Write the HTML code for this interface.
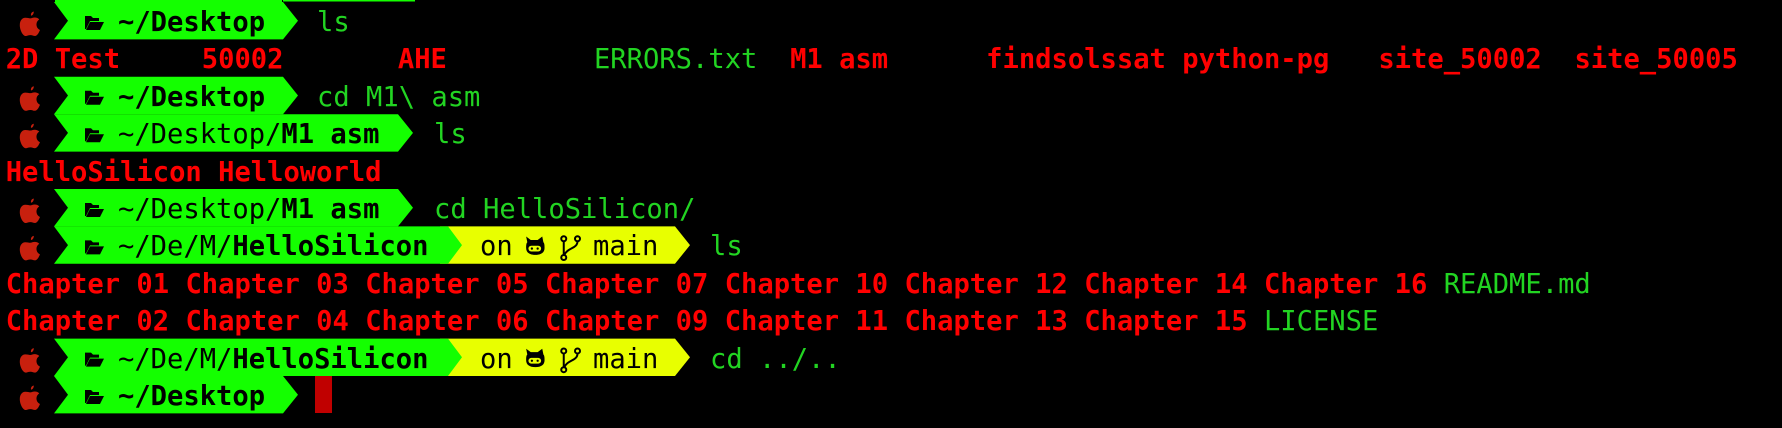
<!DOCTYPE html>
<html><head><meta charset="utf-8">
<style>
html,body{margin:0;padding:0;background:#000;width:1782px;height:428px;overflow:hidden;position:relative}
.t{position:absolute;font-family:"DejaVu Sans Mono","Liberation Mono",monospace;font-size:27.15px;line-height:37.4px;height:37.4px;white-space:pre;color:#22d422}
.r{color:#ff0000;font-weight:bold}
.g{color:#22d422;font-weight:normal}
.k{color:#000}
.b{font-weight:bold}
svg{position:absolute;left:0;top:0}
</style></head><body>
<svg width="1782" height="428" viewBox="0 0 1782 428">
<defs>
<g id="apple"><path fill="#c8200e" d="M10 5.5c1.2-.2 2-1.3 2-3-1.4.3-2.3 1.4-2 3zM6 7c-2.5 0-4 2.2-4 5.2 0 3.6 2.2 7.8 4.2 7.8 1.2 0 1.8-.6 3.3-.6s2 .6 3.3.6c1.5 0 2.8-2.2 3.6-4.3-1.6-.8-2.5-2.2-2.5-4 0-1.6.8-2.8 2-3.6C15 7.2 13.8 6.8 12.7 6.8c-1.4 0-2.2.6-3.2.6S7.6 7 6 7z"/></g>
<g id="folder"><path fill="#000" d="M0 1h6l2 2h6v3H5L1 14H0z M5 7h14l-4 8H1z"/></g>
<g id="cat"><path fill="#000" d="M1 0l4 3h6l4-3 1 5c1 1 1 3 1 5 0 4-3 6-8 6s-8-2-8-6c0-2 0-4 1-5z"/><rect x="3" y="8" width="11" height="5" rx="2.5" fill="#e8ff00"/><circle cx="6" cy="10.5" r="1" fill="#000"/><circle cx="11" cy="10.5" r="1" fill="#000"/></g>
<g id="branch" fill="none" stroke="#000" stroke-width="1.6"><circle cx="3" cy="3" r="2"/><circle cx="3" cy="18" r="2"/><circle cx="14" cy="3" r="2"/><path d="M3 5v11M14 5c0 6-8 5-10.5 11"/></g>
</defs>
<rect x="55" y="0" width="227" height="2" fill="#14ff00"/>
<rect x="283" y="0" width="132" height="1.5" fill="#14ff00"/>
<use href="#apple" transform="translate(17,8) scale(1.4)"/>
<polygon fill="#14ff00" points="54,2 283,2 298,20.7 283,39.4 54,39.4 68,20.7"/>
<use href="#folder" transform="translate(85,15)"/>
<use href="#apple" transform="translate(17,82.8) scale(1.4)"/>
<polygon fill="#14ff00" points="54,76.8 283,76.8 298,95.5 283,114.2 54,114.2 68,95.5"/>
<use href="#folder" transform="translate(85,89.8)"/>
<use href="#apple" transform="translate(17,120.2) scale(1.4)"/>
<polygon fill="#14ff00" points="54,114.2 398,114.2 413,132.9 398,151.6 54,151.6 68,132.9"/>
<use href="#folder" transform="translate(85,127.2)"/>
<use href="#apple" transform="translate(17,195) scale(1.4)"/>
<polygon fill="#14ff00" points="54,189 398,189 413,207.7 398,226.4 54,226.4 68,207.7"/>
<use href="#folder" transform="translate(85,202)"/>
<use href="#apple" transform="translate(17,232.4) scale(1.4)"/>
<polygon fill="#e8ff00" points="440,226.4 675,226.4 690,245.1 675,263.8 440,263.8"/>
<polygon fill="#14ff00" points="54,226.4 448,226.4 462,245.1 448,263.8 54,263.8 68,245.1"/>
<use href="#folder" transform="translate(85,239.4)"/>
<use href="#cat" transform="translate(525,236.5) scale(1.15)"/>
<use href="#branch" transform="translate(560,235) scale(1.25)"/>
<use href="#apple" transform="translate(17,344.6) scale(1.4)"/>
<polygon fill="#e8ff00" points="440,338.6 675,338.6 690,357.3 675,376 440,376"/>
<polygon fill="#14ff00" points="54,338.6 448,338.6 462,357.3 448,376 54,376 68,357.3"/>
<use href="#folder" transform="translate(85,351.6)"/>
<use href="#cat" transform="translate(525,348.7) scale(1.15)"/>
<use href="#branch" transform="translate(560,347.2) scale(1.25)"/>
<use href="#apple" transform="translate(17,382) scale(1.4)"/>
<polygon fill="#14ff00" points="54,376 283,376 298,394.7 283,413.4 54,413.4 68,394.7"/>
<use href="#folder" transform="translate(85,389)"/>
<rect x="315" y="376" width="17" height="37" fill="#c00000"/>
</svg>

<div class="t k b" style="left:118px;top:4px">~/Desktop</div>
<div class="t" style="left:317px;top:4px">ls</div>

<div class="t" style="left:5.7px;top:41.4px"><span class="r">2D Test</span>     <span class="r">50002</span>       <span class="r">AHE</span>         <span class="g">ERRORS.txt</span>  <span class="r">M1 asm</span>      <span class="r">findsolssat</span> <span class="r">python-pg</span>   <span class="r">site_50002</span>  <span class="r">site_50005</span></div>

<div class="t k b" style="left:118px;top:78.8px">~/Desktop</div>
<div class="t" style="left:317px;top:78.8px">cd M1\ asm</div>

<div class="t k" style="left:118px;top:116.2px">~/Desktop/<b>M1 asm</b></div>
<div class="t" style="left:434px;top:116.2px">ls</div>

<div class="t r" style="left:5.7px;top:153.6px">HelloSilicon Helloworld</div>

<div class="t k" style="left:118px;top:191px">~/Desktop/<b>M1 asm</b></div>
<div class="t" style="left:434px;top:191px">cd HelloSilicon/</div>

<div class="t k" style="left:118px;top:228.4px">~/De/M/<b>HelloSilicon</b></div>
<div class="t k" style="left:480px;top:228.4px">on</div>
<div class="t k" style="left:593px;top:228.4px">main</div>
<div class="t" style="left:710px;top:228.4px">ls</div>

<div class="t" style="left:5.7px;top:265.8px"><span class="r">Chapter 01</span> <span class="r">Chapter 03</span> <span class="r">Chapter 05</span> <span class="r">Chapter 07</span> <span class="r">Chapter 10</span> <span class="r">Chapter 12</span> <span class="r">Chapter 14</span> <span class="r">Chapter 16</span> <span class="g">README.md</span></div>
<div class="t" style="left:5.7px;top:303.2px"><span class="r">Chapter 02</span> <span class="r">Chapter 04</span> <span class="r">Chapter 06</span> <span class="r">Chapter 09</span> <span class="r">Chapter 11</span> <span class="r">Chapter 13</span> <span class="r">Chapter 15</span> <span class="g">LICENSE</span></div>

<div class="t k" style="left:118px;top:340.6px">~/De/M/<b>HelloSilicon</b></div>
<div class="t k" style="left:480px;top:340.6px">on</div>
<div class="t k" style="left:593px;top:340.6px">main</div>
<div class="t" style="left:710px;top:340.6px">cd ../..</div>

<div class="t k b" style="left:118px;top:378px">~/Desktop</div>
</body></html>
